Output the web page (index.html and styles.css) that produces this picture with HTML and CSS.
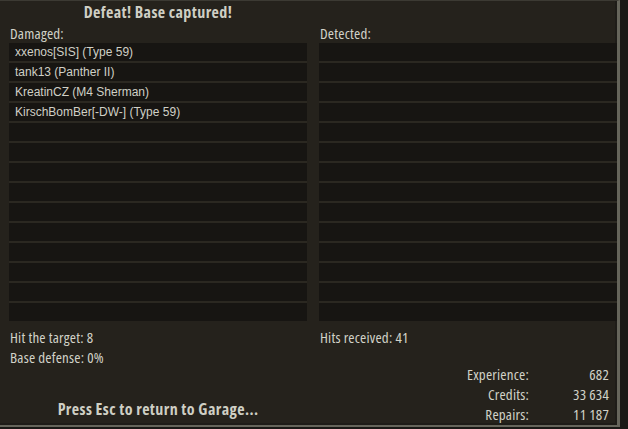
FILE: index.html
```html
<!DOCTYPE html>
<html>
<head>
<meta charset="utf-8">
<link rel="stylesheet" href="styles.css">
</head>
<body>
<div class="panel">
  <div class="title-row"><div class="title">Defeat! Base captured!</div></div>
  <div class="columns">
    <div class="col">
      <div class="label">Damaged:</div>
      <ul class="list">
        <li>xxenos[SIS] (Type 59)</li>
        <li>tank13 (Panther II)</li>
        <li>KreatinCZ (M4 Sherman)</li>
        <li>KirschBomBer[-DW-] (Type 59)</li>
        <li></li><li></li><li></li><li></li><li></li><li></li><li></li><li></li><li></li><li></li>
      </ul>
      <div class="stats">
        <div class="stat">Hit the target: 8</div>
        <div class="stat">Base defense: 0%</div>
      </div>
      <div class="esc">Press Esc to return to Garage...</div>
    </div>
    <div class="col">
      <div class="label">Detected:</div>
      <ul class="list">
        <li></li><li></li><li></li><li></li><li></li><li></li><li></li><li></li><li></li><li></li><li></li><li></li><li></li><li></li>
      </ul>
      <div class="stats">
        <div class="stat">Hits received: 41</div>
      </div>
      <div class="rewards">
        <span class="rlabel">Experience:</span><span class="rval">682</span>
        <span class="rlabel">Credits:</span><span class="rval">33 634</span>
        <span class="rlabel">Repairs:</span><span class="rval">11 187</span>
      </div>
    </div>
  </div>
</div>
</body>
</html>
```

FILE: styles.css
```css
html, body {
  margin: 0;
  padding: 0;
  background: #1a1916;
  width: 628px;
  height: 429px;
  overflow: hidden;
}

.panel {
  box-sizing: border-box;
  width: 620px;
  height: 427px;
  background: #25221c;
  border-top: 1px solid #3c3a33;
  border-right: 3px solid #66655b;
  border-bottom: 2px solid #66655b;
  box-shadow: inset -2px -2px 0 #1e1c18;
  padding-left: 9px;
  font-family: "Open Sans", "DejaVu Sans Condensed", sans-serif;
  font-stretch: 75%;
  color: #d2d2c8;
}

.title-row {
  width: 298px;
  height: 22px;
  display: flex;
  justify-content: center;
  align-items: center;
}

.title {
  font-size: 16px;
  font-weight: bold;
  letter-spacing: 0.4px;
  line-height: 22px;
  color: #cfcfc4;
}

.columns {
  display: grid;
  grid-template-columns: 298px 298px;
  column-gap: 12px;
}

.col {
  display: flex;
  flex-direction: column;
}

.label {
  font-size: 15px;
  letter-spacing: 0.2px;
  line-height: 20px;
  padding-left: 1px;
}

.list {
  list-style: none;
  margin: 0;
  padding: 0;
  display: flex;
  flex-direction: column;
  gap: 2px;
  background: #2b2821;
}

.list li {
  height: 18px;
  line-height: 18px;
  background: #171512;
  padding-left: 6px;
  font-family: "Liberation Sans", Arial, sans-serif;
  font-stretch: normal;
  font-size: 12px;
  letter-spacing: 0;
  color: #d0d0c6;
}

.stats {
  padding-top: 6px;
}

.stat {
  font-size: 15px;
  letter-spacing: 0.2px;
  line-height: 20px;
  padding-left: 1px;
}

.esc {
  margin-top: 32px;
  text-align: center;
  font-size: 16px;
  font-weight: bold;
  letter-spacing: 0.4px;
  line-height: 20px;
  color: #cfcfc4;
}

.rewards {
  margin-top: 17px;
  display: grid;
  grid-template-columns: auto 80px;
  justify-content: end;
  justify-items: end;
  padding-right: 8px;
  font-size: 15px;
  letter-spacing: 0.2px;
  line-height: 20px;
}
```
